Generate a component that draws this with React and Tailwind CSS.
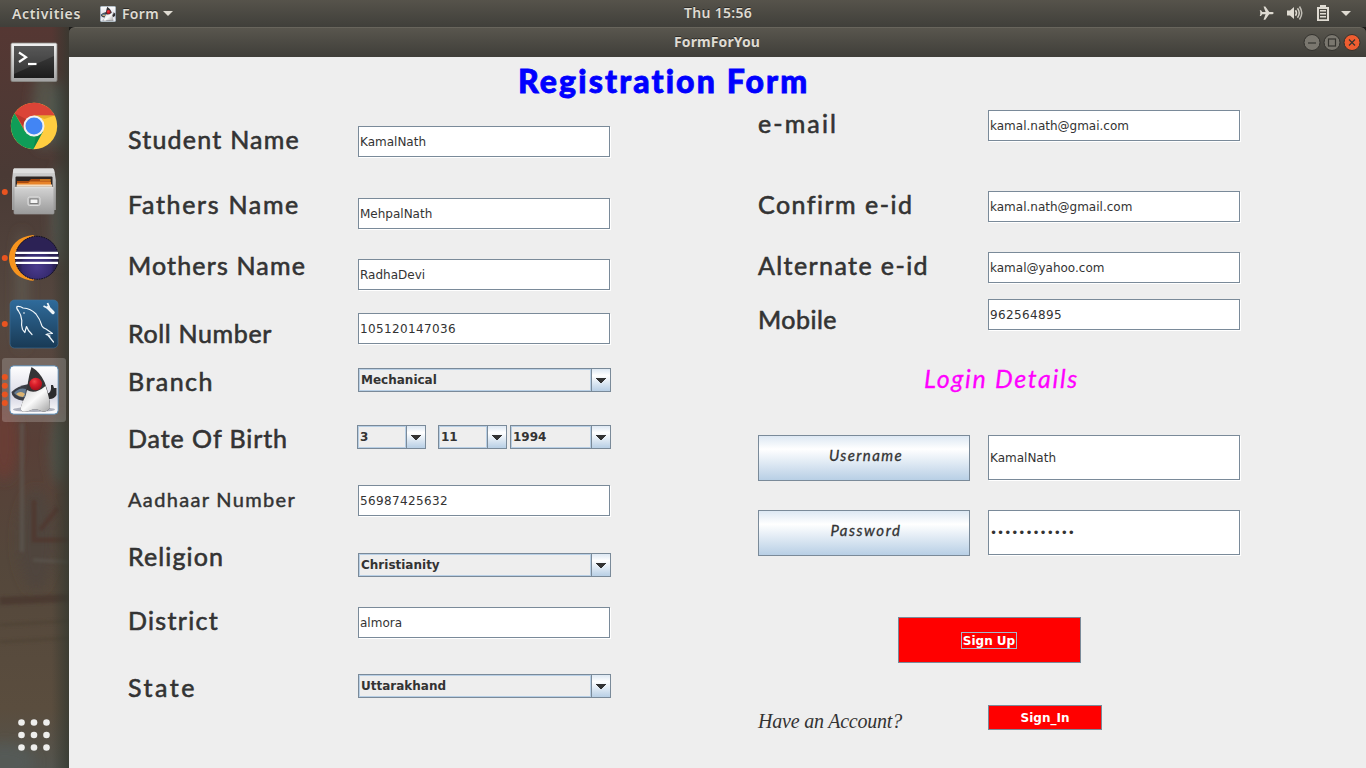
import React, { useLayoutEffect, useRef, useState } from "react";

/* Single line of text whose tracking is adjusted so it spans `width` pixels. */
function Fit({ width, className = "", children }) {
  const ref = useRef(null);
  const [gap, setGap] = useState(0);
  useLayoutEffect(() => {
    const natural = ref.current.getBoundingClientRect().width - gap * children.length;
    setGap((width - natural) / children.length);
  }, [width, children]);
  return (
    <span ref={ref} className={"inline-block whitespace-pre " + className} style={{ letterSpacing: gap + "px" }}>
      {children}
    </span>
  );
}

const label = "font-['Lato'] text-[25px] leading-[30px] font-normal text-[#333333] [-webkit-text-stroke:0.6px_#333333]";
const smallLabel = "font-['Lato'] text-[20px] leading-[26px] font-normal text-[#333333] [-webkit-text-stroke:0.45px_#333333]";

function Row({ text, width, className = "", labelClass = "", fieldClass = "", small, children }) {
  return (
    <div className={"flex shrink-0 items-start " + className}>
      <div className={"w-[230px] shrink-0 flex " + labelClass}>
        <Fit width={width} className={small ? smallLabel : label}>{text}</Fit>
      </div>
      <div className={"flex " + fieldClass}>{children}</div>
    </div>
  );
}

function Field({ value, className = "h-[31px]" }) {
  return (
    <div className={"flex w-[252px] items-center border border-[#7a8a99] bg-white pl-px font-['DejaVu_Sans'] text-[12px] text-[#333333] shadow-[1px_1px_0_#ffffff] " + className}>
      {value}
    </div>
  );
}

function Combo({ value, className = "w-[253px]" }) {
  return (
    <div className={"flex h-6 border border-[#7a8a99] bg-[#eeeeee] " + className}>
      <div className="flex flex-1 items-center border border-[#b8cfe5] pl-px pb-px font-['DejaVu_Sans'] text-[12px] font-bold text-[#333333]">
        {value}
      </div>
      <div className="flex w-[19px] items-center border-l border-[#7a8a99] bg-linear-to-b from-[#dde8f3] via-white via-30% to-[#b8cfe5] pl-1">
        <svg width="10" height="5" className="mt-px" viewBox="0 0 10 5" shapeRendering="crispEdges">
          <path d="M0 0H10V1H0ZM1 1H9V2H1ZM2 2H8V3H2ZM3 3H7V4H3ZM4 4H6V5H4Z" fill="#333333" />
        </svg>
      </div>
    </div>
  );
}

function MetalButton({ text, width }) {
  return (
    <div className="flex h-[46px] w-[212px] items-center justify-center border border-[#7a8a99] bg-linear-to-b from-[#dde8f3] via-white via-30% to-[#b8cfe5] pb-[6px] pl-1">
      <Fit width={width} className="font-['Lato'] text-[15px] leading-[18px] font-normal italic text-[#333333] [-webkit-text-stroke:0.3px_#333333]">{text}</Fit>
    </div>
  );
}

function Dots({ ys }) {
  return ys.map((y) => <circle key={y} cx="4.8" cy={y} r="3" fill="#e95420" />);
}

function Dock() {
  return (
    <div className="relative flex w-[69px] shrink-0 flex-col bg-[#50453c]">
      <svg className="absolute inset-0" width="69" height="741" viewBox="0 27 69 741">
        <defs>
          <linearGradient id="wall" x1="0" y1="0" x2="0" y2="1">
            <stop offset="0" stopColor="#553733" />
            <stop offset=".2" stopColor="#4a3a35" />
            <stop offset=".4" stopColor="#554840" />
            <stop offset=".56" stopColor="#583f37" />
            <stop offset=".72" stopColor="#54473b" />
            <stop offset=".92" stopColor="#5a4d3e" />
            <stop offset="1" stopColor="#53544e" />
          </linearGradient>
          <linearGradient id="edge" x1="0" y1="0" x2="1" y2="0">
            <stop offset=".75" stopColor="#33382f" stopOpacity="0" />
            <stop offset="1" stopColor="#33382f" stopOpacity=".75" />
          </linearGradient>
          <filter id="soft" x="-100%" y="-50%" width="300%" height="200%"><feGaussianBlur stdDeviation="6" /></filter>
          <filter id="soft1" x="-50%" y="-50%" width="200%" height="200%"><feGaussianBlur stdDeviation="1.500" /></filter>
        </defs>
        <rect y="27" width="69" height="741" fill="url(#wall)" />
        <g filter="url(#soft)">
          <ellipse cx="44" cy="110" rx="12" ry="40" fill="#54524a" />
          <ellipse cx="60" cy="115" rx="7" ry="35" fill="#4d564f" />
          <ellipse cx="60" cy="215" rx="8" ry="50" fill="#525750" />
          <ellipse cx="22" cy="290" rx="6" ry="60" fill="#5d564e" />
          <ellipse cx="60" cy="450" rx="10" ry="35" fill="#50524a" />
          <ellipse cx="36" cy="540" rx="18" ry="50" fill="#50453c" />
          <ellipse cx="4" cy="440" rx="14" ry="40" fill="#693c35" />
          <ellipse cx="5" cy="762" rx="30" ry="18" fill="#555a56" />
        </g>
        <g filter="url(#soft1)" fill="none" opacity=".6">
          <path d="M22 423V552" stroke="#5e5c54" strokeWidth="4" />
          <path d="M34 500V540H69M40 530L58 508" stroke="#4f332b" strokeWidth="5" />
          <path d="M33 560L69 562" stroke="#5f5c54" strokeWidth="3" />
          <path d="M0 601L69 598" stroke="#45302a" strokeWidth="8" />
          <path d="M0 625L69 621M0 642L69 638" stroke="#4c4033" strokeWidth="3" />
        </g>
        <rect y="27" width="69" height="741" fill="url(#edge)" />
      </svg>

      <svg className="relative shrink-0" width="69" height="66" viewBox="0 27 69 66">
        <defs>
          <linearGradient id="tf" x1="0" y1="0" x2="0" y2="1"><stop offset="0" stopColor="#f2f2f2" /><stop offset="1" stopColor="#a2a2a2" /></linearGradient>
          <linearGradient id="ts" x1="0" y1="0" x2="0" y2="1"><stop offset="0" stopColor="#454545" /><stop offset="1" stopColor="#1c1c1c" /></linearGradient>
        </defs>
        <rect x="11" y="43" width="46" height="38.500" rx="1.5" fill="url(#tf)" stroke="#8a8a86" strokeWidth=".8" />
        <rect x="14" y="46" width="40" height="32" fill="url(#ts)" />
        <path d="M14 46H54V56L14 74Z" fill="#fff" opacity=".1" />
        <path d="M19 52.500L26 57.200L19 62" fill="none" stroke="#fff" strokeWidth="2.2" />
        <path d="M28 64H36.500" stroke="#fff" strokeWidth="2.2" />
      </svg>

      <svg className="relative shrink-0" width="69" height="66" viewBox="0 93 69 66">
        <circle cx="34" cy="126" r="23.200" fill="#ffcd40" />
        <path d="M34 115.500H54.700A23.200 23.200 0 0 0 14.600 113.300L24.900 131.200Z" fill="#db4437" />
        <path d="M14.600 113.300A23.200 23.200 0 0 0 33.300 149.200L43.100 131.200L34 136.500L24.900 131.200Z" fill="#0f9d58" />
        <path d="M14.600 113.300L23.800 127L26 119Z" fill="#a52e25" opacity=".6" />
        <path d="M34 115.500H54.700L44.500 119Z" fill="#d69a1d" opacity=".6" />
        <path d="M43.100 131.200L33.300 149.200L36 136Z" fill="#0a7340" opacity=".5" />
        <circle cx="34" cy="126" r="10.500" fill="#f1f1f1" />
        <circle cx="34" cy="126" r="8.500" fill="#4285f4" />
      </svg>

      <svg className="relative shrink-0" width="69" height="66" viewBox="0 159 69 66">
        <defs><linearGradient id="cab" x1="0" y1="0" x2="0" y2="1"><stop offset="0" stopColor="#d4d4d4" /><stop offset="1" stopColor="#9a9a9a" /></linearGradient></defs>
        <Dots ys={[192]} />
        <path d="M14 168.500H53Q54 168.500 54.500 171L55.800 180V210H12V180L13 171Q13 168.500 14 168.500Z" fill="url(#cab)" />
        <path d="M14 168.500H53L54.500 173H13Z" fill="#dedede" />
        <rect x="15.500" y="176.500" width="37" height="12" rx="1" fill="#2d2523" />
        <path d="M17 181H29L31 179H50V188H17Z" fill="#a8490f" />
        <path d="M17 183H28L30 181.500H51V188H17Z" fill="#e8842a" />
        <path d="M16.500 184.500H52V188H16.500Z" fill="#f3dcc0" />
        <path d="M40 180H51" stroke="#f2a130" />
        <rect x="14" y="187" width="40" height="27" rx="1" fill="url(#cab)" stroke="#999" strokeWidth=".7" />
        <path d="M14.500 187.700H53.500" stroke="#e5e5e5" />
        <rect x="28" y="197" width="12" height="8.500" rx="1.500" fill="#b7b7b7" stroke="#e0e0e0" />
        <rect x="30" y="199" width="8" height="4.500" fill="#f5f5f5" stroke="#666" strokeWidth=".8" />
      </svg>

      <svg className="relative shrink-0" width="69" height="66" viewBox="0 225 69 66">
        <defs><radialGradient id="ecl" cx=".5" cy=".7" r=".6"><stop offset="0" stopColor="#4a3b8e" /><stop offset=".55" stopColor="#372b70" /><stop offset=".65" stopColor="#2c2255" /><stop offset="1" stopColor="#2c2255" /></radialGradient></defs>
        <Dots ys={[258]} />
        <path d="M33 235C1 238 1 278 33 280.700L36 279V237Z" fill="#f7941e" />
        <circle cx="36.900" cy="257.800" r="21.800" fill="url(#ecl)" />
        <circle cx="36.900" cy="257.800" r="21.500" fill="none" stroke="#0d0d12" strokeDasharray="1.5 1" />
        <path d="M15.500 252.800H58M14.800 257.800H58.600M15.500 262.800H58" stroke="#fff" strokeWidth="2.200" />
      </svg>

      <svg className="relative shrink-0" width="69" height="66" viewBox="0 291 69 66">
        <defs><linearGradient id="my" x1="0" y1="0" x2="0" y2="1"><stop offset="0" stopColor="#2f6b9b" /><stop offset="1" stopColor="#193a55" /></linearGradient></defs>
        <Dots ys={[324]} />
        <rect x="10" y="300" width="48" height="48" rx="4.500" fill="url(#my)" stroke="#3f7197" strokeWidth=".6" />
        <path d="M17 306.500Q20 306 23 308Q31 308.500 36 314Q40 319 42 326Q43 328 46 329L52.500 333.500L47 334L53.500 342M46 334.500L50 336M17 306.500Q16 308 18.500 311Q21.500 315 21.800 320.500Q21 325 22.500 329.500L24.800 332.500L26.500 326.500Q28 331 32 334.500" fill="none" stroke="#f1f7fb" strokeWidth="1.200" strokeLinejoin="round" strokeLinecap="round" />
        <circle cx="24" cy="313" r=".8" fill="#fff" />
        <path d="M48 307.500L53 312.500" stroke="#eef4f8" strokeWidth="3.400" strokeLinecap="round" />
        <path d="M47.500 303L49 306.500L47.500 308L43.500 306" fill="none" stroke="#eef4f8" strokeWidth="1.800" />
      </svg>

      <svg className="relative shrink-0" width="69" height="66" viewBox="0 357 69 66">
        <rect x="2" y="358" width="64" height="64" rx="3" fill="#fff" opacity=".2" />
        <g transform="translate(9 365)"><Duke /></g>
        <Dots ys={[377, 385.700, 394.500, 403]} />
      </svg>

      <svg className="relative mt-auto mb-[13px] shrink-0" width="69" height="40" viewBox="0 715 69 40">
        {[722.5, 735, 747.5].map((y) => [21.5, 34, 46.5].map((x) => <circle key={x + "-" + y} cx={x} cy={y} r="3.3" fill="#eeeeec" />))}
      </svg>
    </div>
  );
}

function Duke() {
  return (
    <g>
      <defs>
        <linearGradient id="dbg" x1="0" y1="0" x2="0" y2="1"><stop offset="0" stopColor="#ffffff" /><stop offset=".65" stopColor="#d8d8e4" /><stop offset="1" stopColor="#ffffff" /></linearGradient>
        <linearGradient id="belly" x1="0" y1="0" x2="1" y2="1"><stop offset="0" stopColor="#c8c8c8" /><stop offset=".5" stopColor="#fafafa" /><stop offset="1" stopColor="#a2a2a2" /></linearGradient>
        <radialGradient id="nose" cx=".4" cy=".3" r=".7"><stop offset="0" stopColor="#f04a4a" /><stop offset=".4" stopColor="#dc1f2b" /><stop offset="1" stopColor="#a3101c" /></radialGradient>
      </defs>
      <rect x=".8" y=".8" width="48.400" height="48.400" rx="4" fill="url(#dbg)" stroke="#5786ad" strokeWidth="1" />
      <ellipse cx="25" cy="44.500" rx="21" ry="2.500" fill="#aeb1bd" />
      <path d="M20 19Q8 21 2.500 27Q2.500 34 15 36L19 30Z" fill="#3a3d45" />
      <path d="M5 28Q10 22 17 24L16 32Q9 33 5 28Z" fill="#647a91" />
      <path d="M7 29Q12 25 16 29L14 32Q10 32 7 29Z" fill="#dbb371" />
      <path d="M35 28Q41 30 42 24L42 20L44 20L45 23H47.500V30Q44 36 36 33Z" fill="#2c2c2e" />
      <path d="M22.500 2Q31 7 35.500 17Q41 31 41 43Q37 48.500 31 45.500Q26 43 21 45.500Q13 49 11.500 43.500Q13 37 16.500 31Q18 25 19 17Q20 10 22.500 2Z" fill="#343436" />
      <path d="M18 25Q26 30 36.500 21Q41 34 41 43Q37 48.500 31 45.500Q26 43 21 45.500Q13 49 11.500 43.500Q13 37 16.500 31Z" fill="url(#belly)" />
      <circle cx="26.700" cy="19" r="6.300" fill="url(#nose)" />
    </g>
  );
}

const barText = "font-['Noto_Sans'] text-[14px] leading-[20px] font-semibold text-[#dfdbd2] [text-shadow:0_-1px_0_#2c2b28]";

function TopBar() {
  return (
    <header className="flex h-[27px] shrink-0 items-center justify-between bg-linear-to-b from-[#56534b] to-[#403f3a]">
      <div className="flex w-[300px] items-center pl-3">
        <Fit width={69} className={barText}>Activities</Fit>
        <svg className="ml-[19px]" width="16" height="16" viewBox="0 0 50 50"><Duke /></svg>
        <Fit width={37} className={"ml-[6px] " + barText}>Form</Fit>
        <svg className="ml-1" width="10" height="5" viewBox="0 0 10 5"><path d="M0 0H10L5 5Z" fill="#dfdbd2" /></svg>
      </div>
      <div className="flex flex-1 justify-center pl-[136px] pb-px"><Fit width={68} className={barText}>Thu 15:56</Fit></div>
      <svg className="shrink-0" width="366" height="27" viewBox="1000 0 366 27" fill="#dfdbd2">
        <path d="M1260.500 12H1272.500Q1275 13 1272.500 14.200H1260.500Z" />
        <path d="M1270 13.100L1265.300 6.500H1263.500L1266 13.100L1263.500 19.700H1265.300Z" />
        <path d="M1263 13.100L1261 10.300H1259.700L1260.700 13.100L1259.700 16H1261Z" />
        <path d="M1287 10.500H1290L1294 7V19L1290 15.500H1287Z" />
        <g fill="none" stroke="#dfdbd2" strokeWidth="1.500"><path d="M1295.500 10.300Q1297.500 13 1295.500 15.700" /><path d="M1297.500 8.300Q1301 13 1297.500 17.700" opacity=".9" /><path d="M1299.500 6.500Q1304 13 1299.500 19.500" opacity=".8" /></g>
        <path fillRule="evenodd" d="M1320 5H1326V7H1329V21H1317V7H1320ZM1319 9V19.200H1327V9Z" />
        <path d="M1320 10H1326V11.500H1320ZM1320 13H1326V14.500H1320ZM1320 16H1326V17.500H1320Z" />
        <path d="M1341 11H1351L1346 16Z" />
      </svg>
    </header>
  );
}

function TitleBar() {
  return (
    <div className="flex h-[30px] shrink-0 items-center rounded-t-md border-t border-[#68655c] bg-linear-to-b from-[#59564e] to-[#3f3e39]">
      <div className="flex flex-1 justify-center pl-[65px] pb-[2px]"><Fit width={86} className={barText + " !font-bold"}>FormForYou</Fit></div>
      <svg className="shrink-0" width="66" height="28" viewBox="1300 28.500 66 28">
        <circle cx="1312" cy="42" r="8" fill="#7a776f" stroke="#33322e" />
        <circle cx="1332" cy="42" r="8" fill="#7a776f" stroke="#33322e" />
        <circle cx="1352" cy="42" r="8" fill="#ef5d30" stroke="#33322e" />
        <g fill="none" stroke="#35342f" strokeWidth="1.200"><path d="M1308 42.500H1316" /><rect x="1328.500" y="38.500" width="7" height="7" /><path d="M1349 39L1355 45M1355 39L1349 45" /></g>
      </svg>
    </div>
  );
}

export default function App() {
  return (
    <div className="flex h-[768px] w-[1366px] flex-col overflow-hidden">
      <TopBar />
      <div className="flex min-h-0 flex-1">
        <Dock />
        <main className="flex min-w-0 flex-1 flex-col bg-[#1d1c1a]">
          <TitleBar />
          <div className="flex min-h-0 flex-1 flex-col bg-[#eeeeee]">
            <h1 className="flex h-[51px] shrink-0 pt-[5px] pl-[449px]">
              <Fit width={292} className="font-['Lato'] text-[32px] leading-[38px] font-black text-[#0000ff] [-webkit-text-stroke:0.8px_#0000ff]">Registration Form</Fit>
            </h1>
            <div className="flex min-h-0 flex-1 pl-[59px]">
              <section className="flex w-[630px] shrink-0 flex-col pt-4">
                <Row text="Student Name" width={172} className="h-[65px]" fieldClass="pt-[2px]"><Field value="KamalNath" /></Row>
                <Row text="Fathers Name" width={172} className="h-[61px]" fieldClass="pt-[9px]"><Field value="MehpalNath" /></Row>
                <Row text="Mothers Name" width={178} className="h-[63px]" fieldClass="pt-[9px]"><Field value="RadhaDevi" /></Row>
                <Row text="Roll Number" width={144} className="h-[53px]" labelClass="pt-[5px]"><Field value="105120147036" className="h-[31px] tracking-[0.36px]" /></Row>
                <Row text="Branch" width={86} className="h-[57px]" fieldClass="pt-[2px]"><Combo value="Mechanical" /></Row>
                <Row text="Date Of Birth" width={160} className="h-[62px]" fieldClass="pt-[2px] -ml-px">
                  <Combo value="3" className="w-[69px]" />
                  <Combo value="11" className="ml-3 w-[69px]" />
                  <Combo value="1994" className="ml-[3px] w-[101px]" />
                </Row>
                <Row text="Aadhaar Number" width={168} small className="h-[56px]" labelClass="pt-[1px]"><Field value="56987425632" className="h-[31px] tracking-[0.36px]" /></Row>
                <Row text="Religion" width={96} className="h-[64px]" fieldClass="pt-[12px]"><Combo value="Christianity" /></Row>
                <Row text="District" width={91} className="h-[67px]" fieldClass="pt-[2px]"><Field value="almora" /></Row>
                <Row text="State" width={69} className="h-[60px]" fieldClass="pt-[2px]"><Combo value="Uttarakhand" /></Row>
              </section>

              <section className="flex w-[482px] shrink-0 flex-col">
                <Row text="e-mail" width={80} className="h-[81px]" fieldClass="pt-[2px]"><Field value="kamal.nath@gmai.com" /></Row>
                <Row text="Confirm e-id" width={155} className="h-[61px]" fieldClass="pt-[2px]"><Field value="kamal.nath@gmail.com" /></Row>
                <Row text="Alternate e-id" width={171} className="h-[49px]" fieldClass="pt-[2px]"><Field value="kamal@yahoo.com" /></Row>
                <Row text="Mobile" width={79} className="h-[64px]" labelClass="pt-[5px]"><Field value="962564895" className="h-[31px] tracking-[0.36px]" /></Row>
                <h2 className="flex h-[72px] shrink-0 pl-[166px]">
                  <Fit width={155} className="font-['Lato'] text-[25px] leading-[30px] font-normal italic text-[#ff00ff] [-webkit-text-stroke:0.3px_#ff00ff]">Login Details</Fit>
                </h2>
                <div className="flex h-[75px] shrink-0 items-start gap-[18px]">
                  <MetalButton text="Username" width={74} />
                  <Field value="KamalNath" className="h-[45px]" />
                </div>
                <div className="flex h-[107px] shrink-0 items-start gap-[18px]">
                  <MetalButton text="Password" width={71} />
                  <Field value="••••••••••••" className="h-[45px]" />
                </div>
                <div className="flex h-[88px] shrink-0 items-start pl-[140px]">
                  <button className="flex h-[46px] w-[183px] items-center justify-center border border-[#7a8a99] bg-[#ff0000] font-['DejaVu_Sans'] text-[12px] font-bold text-white">
                    <span className="mr-px flex h-[17px] w-14 items-center justify-center border border-[#a3b8cc] pt-px whitespace-nowrap">Sign Up</span>
                  </button>
                </div>
                <div className="flex shrink-0 items-start">
                  <div className="flex w-[230px] pt-1"><Fit width={144} className="font-['Liberation_Serif'] text-[20px] leading-[24px] italic text-[#333333]">Have an Account?</Fit></div>
                  <button className="flex h-[25px] w-[114px] items-center justify-center border border-[#7a8a99] bg-[#ff0000] font-['DejaVu_Sans'] text-[12px] font-bold text-white">Sign_In</button>
                </div>
              </section>
            </div>
          </div>
        </main>
      </div>
    </div>
  );
}
